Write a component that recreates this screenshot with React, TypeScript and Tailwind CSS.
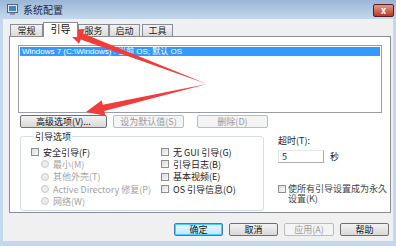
import type { ReactNode } from "react"

const font = { fontFamily: '"Noto Sans CJK SC", "Noto Sans", sans-serif' }

function Box({ disabled }: { disabled?: boolean }) {
  return (
    <span
      className={
        "inline-block w-[8px] h-[8px] shrink-0 border " +
        (disabled
          ? "border-[#c4c4c4] bg-[#f4f4f4]"
          : "border-[#8e8f8f] bg-linear-to-br from-[#dcdcdc] to-[#fafafa]")
      }
    />
  )
}

function Radio() {
  return <span className="inline-block w-[8px] h-[8px] shrink-0 rounded-full border border-[#cacaca] bg-[#ececec]" />
}

function Row({ children, icon, disabled }: { children: ReactNode; icon: ReactNode; disabled?: boolean }) {
  return (
    <div className={"flex items-center gap-[4px] h-[12.3px] text-[9px] leading-none " + (disabled ? "text-[#a3a3a3]" : "text-[#222]")}>
      {icon}
      <span className="whitespace-nowrap">{children}</span>
    </div>
  )
}

function Btn({ children, w, disabled, focus }: { children: ReactNode; w: string; disabled?: boolean; focus?: boolean }) {
  return (
    <div
      className={
        w +
        " h-[13px] flex items-center justify-center rounded-[2px] border text-[9px] leading-none " +
        (disabled
          ? "border-[#b8bcbf] bg-[#f4f4f4] text-[#9a9a9a]"
          : focus
          ? "border-[#3c7fb1] bg-linear-to-b from-[#eaf6fd] to-[#bee6fd] text-[#111] shadow-[inset_0_0_0_1px_#48d1ff]"
          : "border-[#707070] bg-linear-to-b from-[#f3f3f3] to-[#d8d8d8] text-[#111]")
      }
    >
      {children}
    </div>
  )
}

function Tab({ label, w, active }: { label: string; w: string; active?: boolean }) {
  return active ? (
    <div className={w + " h-[15px] relative z-10 -mb-px bg-white border border-b-0 border-[#898c95] flex items-start justify-center pt-[1px] text-[10px] leading-none text-[#111]"}>
      {label}
    </div>
  ) : (
    <div className={w + " h-[12px] border border-b-0 border-[#898c95] bg-linear-to-b from-[#f2f2f2] to-[#dcdcdc] flex items-center justify-center text-[9px] leading-none text-[#222]"}>
      {label}
    </div>
  )
}

export default function App() {
  return (
    <div className="w-[396px] h-[246px] relative overflow-hidden flex flex-col bg-[#c3d7ed]" style={font}>
      {/* title bar */}
      <div className="h-[19px] shrink-0 flex items-center bg-linear-to-b from-[#9ab6d6] to-[#c4d8ee]">
        <svg width="11" height="12" viewBox="0 0 11 12" className="ml-[7px] mt-[1px]">
          <rect x="0.5" y="0.5" width="10" height="8" fill="#dfe7ef" stroke="#52647a" />
          <rect x="2" y="2" width="7" height="5" fill="#4a7fc0" />
          <rect x="3" y="9" width="5" height="2" fill="#8a96a4" />
        </svg>
        <span className="ml-[5px] text-[10px] leading-none text-[#1b2a44]">系统配置</span>
        <div className="ml-auto mr-[2px] mt-[1px] w-[21px] h-[13px] rounded-[2px] border border-[#5a1c1c] bg-linear-to-b from-[#e09a8a] to-[#b8382a] flex items-center justify-center text-white text-[9px] font-bold leading-none">
          x
        </div>
      </div>

      {/* client area */}
      <div className="flex-1 mx-[3px] mb-[5px] bg-[#f0f0f0] flex flex-col">
        <div className="pt-[3px] pl-[7px] flex items-end">
          <Tab label="常规" w="w-[33px]" />
          <Tab label="引导" w="w-[35px]" active />
          <Tab label="服务" w="w-[31px]" />
          <Tab label="启动" w="w-[31px]" />
          <div className="w-[2px]" />
          <Tab label="工具" w="w-[31px]" />
        </div>

        <div className="ml-[6px] mr-[2px] h-[177px] bg-white border border-[#898c95] flex flex-col">
          {/* boot list */}
          <div className="ml-[8px] mt-[8px] w-[364px] h-[68px] border border-[#9a9ea6] p-px">
            <div className="h-[9px] bg-[#3399ff] text-white text-[8px] leading-none flex items-center pl-[2px] whitespace-nowrap" style={{ fontFamily: '"Liberation Sans", "Noto Sans CJK SC", sans-serif' }}>
              Windows 7 (C:\Windows) : 当前 OS; 默认 OS
            </div>
          </div>

          <div className="ml-[10px] mt-[2px] flex gap-[6px]">
            <Btn w="w-[87px]">高级选项(V)...</Btn>
            <Btn w="w-[71px]" disabled>设为默认值(S)</Btn>
            <div className="w-px" />
            <Btn w="w-[71px]" disabled>删除(D)</Btn>
          </div>

          <div className="ml-[10px] mt-[4px] flex">
            <fieldset className="w-[244px] h-[79px] border border-[#d5dfe5] rounded-[3px] pl-[10px] pt-[5px] flex">
              <legend className="ml-[3px] px-[1px] text-[9px] leading-none text-[#222]">引导选项</legend>
              <div className="w-[130px] flex flex-col">
                <Row icon={<Box />}>安全引导(F)</Row>
                <div className="pl-[10px] flex flex-col">
                  <Row icon={<Radio />} disabled>最小(M)</Row>
                  <Row icon={<Radio />} disabled>其他外壳(T)</Row>
                  <Row icon={<Radio />} disabled>Active Directory 修复(P)</Row>
                  <Row icon={<Radio />} disabled>网络(W)</Row>
                </div>
              </div>
              <div className="flex flex-col">
                <Row icon={<Box />}>无 GUI 引导(G)</Row>
                <Row icon={<Box />}>引导日志(B)</Row>
                <Row icon={<Box />}>基本视频(E)</Row>
                <Row icon={<Box />}>OS 引导信息(O)</Row>
              </div>
            </fieldset>

            <div className="ml-[14px] pt-[4px] flex flex-col text-[9px] leading-none text-[#222]">
              <span>超时(T):</span>
              <div className="mt-[5px] flex items-center">
                <div className="w-[46px] h-[13px] border border-[#abadb3] border-t-[#e3e9ef] border-l-[#e2e3ea] bg-white flex items-center pl-[3px]">5</div>
                <span className="ml-[6px]">秒</span>
              </div>
              <div className="mt-[21px] flex items-start gap-[2px] w-[112px]">
                <span className="mt-[1px]"><Box /></span>
                <span className="leading-[10px] text-[#444]">使所有引导设置成为永久设置(K)</span>
              </div>
            </div>
          </div>
        </div>

        <div className="mt-[10px] pr-[4px] flex justify-end gap-[6px]">
          <Btn w="w-[49px]" focus>确定</Btn>
          <Btn w="w-[49px]">取消</Btn>
          <Btn w="w-[50px]" disabled>应用(A)</Btn>
          <Btn w="w-[49px]">帮助</Btn>
        </div>
      </div>

      {/* red annotation arrows */}
      <svg className="absolute inset-0 pointer-events-none" width="396" height="246" viewBox="0 0 396 246">
        <polygon fill="#f23b3b" points="207,84 82.97,33.4 84.67,28.91 65,30 78.99,43.87 80.69,39.38" />
        <polygon fill="#f23b3b" points="207,84 102.81,104.82 101.73,100.15 86,112 105.33,115.73 104.25,111.06" />
      </svg>
    </div>
  )
}
